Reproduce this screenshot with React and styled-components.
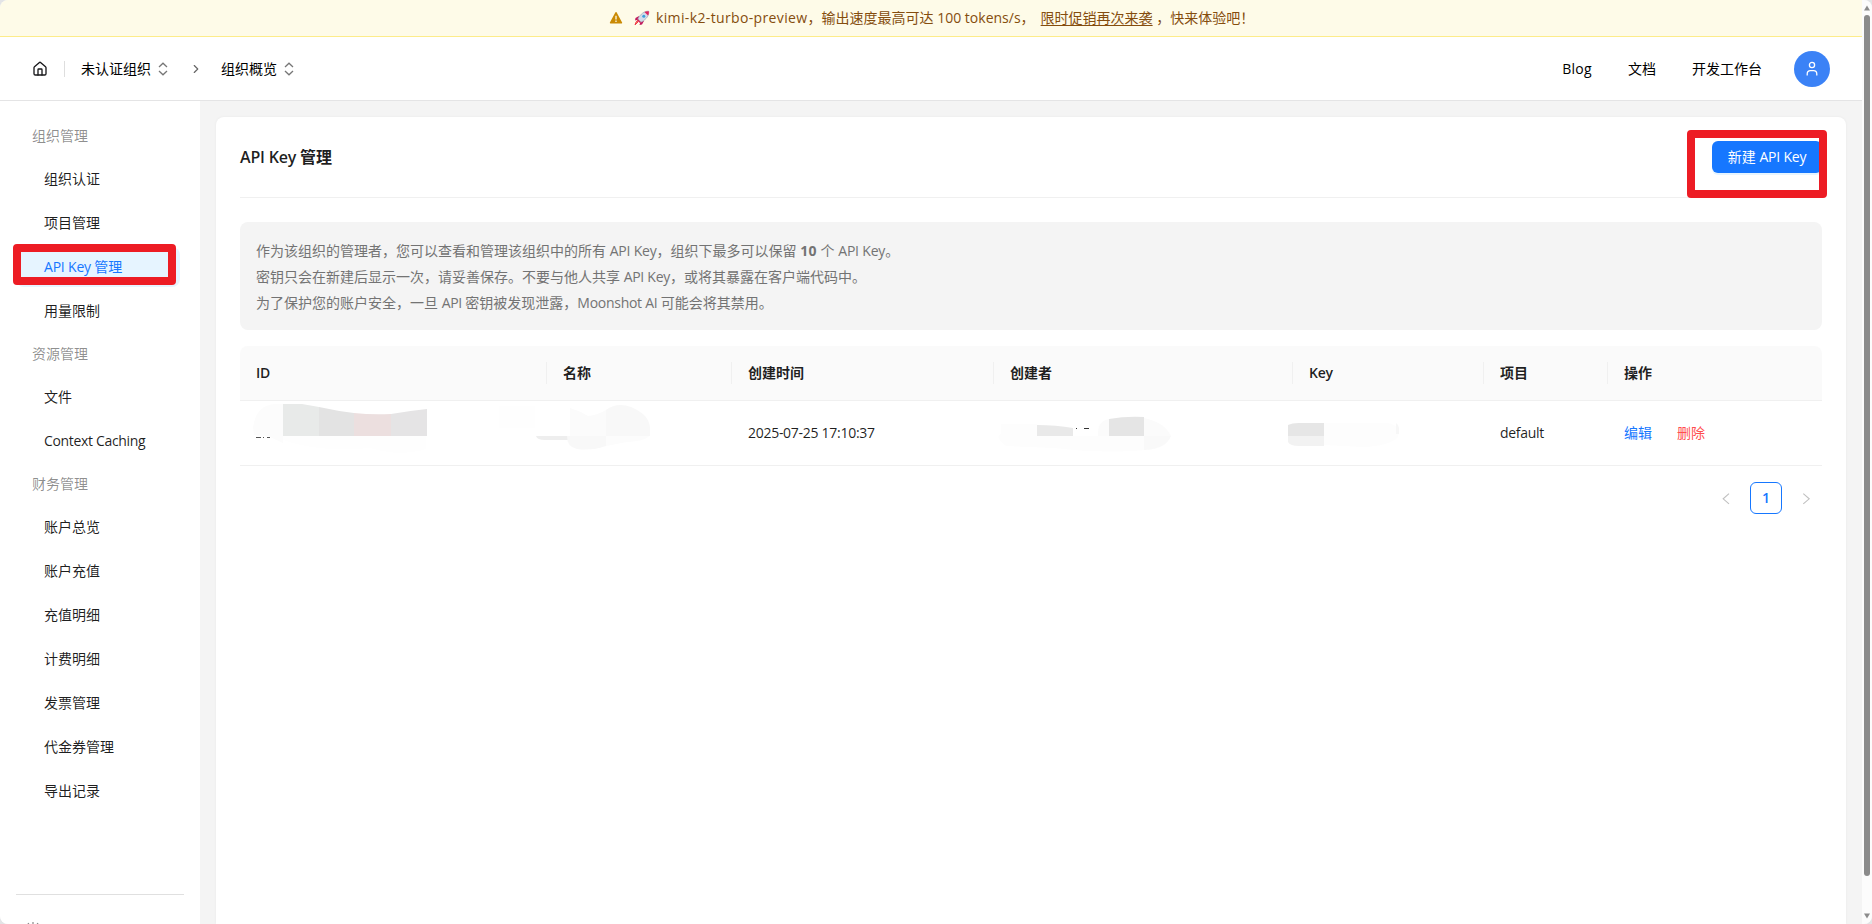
import React from 'react';
import styled, { createGlobalStyle } from 'styled-components';
import { LuHouse, LuChevronRight } from 'react-icons/lu';

const GlobalStyle = createGlobalStyle`
	* {
		box-sizing: border-box;
	}
	body {
		margin: 0;
		background-color: #e3e4e6;
		color: rgba(0, 0, 0, 0.88);
		font-family: 'Open Sans', 'Noto Sans CJK SC', sans-serif;
		font-size: 14px;
		line-height: 22px;
	}
	a {
		color: inherit;
	}
`;

const Latin = styled.span`
	letter-spacing: ${(props) => props.$track || '-0.28px'};
`;

const Window = styled.div`
	position: relative;
	width: 1872px;
	height: 924px;
	display: flex;
	overflow: hidden;
	border-radius: 8px;
	background-color: #f4f4f4;
`;

const Page = styled.div`
	flex: 1;
	display: flex;
	flex-direction: column;
	min-width: 0;
`;

const Banner = styled.div`
	flex: none;
	height: 37px;
	padding-left: 609px;
	display: flex;
	align-items: center;
	white-space: pre;
	color: #854d0e;
	background-color: #fefbe8;
	border-bottom: 1px solid #fdec8a;

	svg {
		flex: none;
	}
`;

const RocketIcon = styled.svg`
	margin-left: 11px;
`;

const BannerText = styled.span`
	margin-left: 6px;
`;

const BannerLink = styled.a`
	margin-left: 6px;
	text-decoration: underline;
	text-underline-offset: 2px;
`;

const Header = styled.header`
	flex: none;
	height: 64px;
	padding: 0 32px;
	display: flex;
	align-items: center;
	justify-content: space-between;
	background-color: #fff;
	border-bottom: 1px solid #e4e4e5;
	color: #000;
`;

const Crumbs = styled.div`
	display: flex;
	align-items: center;

	svg {
		color: #18181b;
	}
`;

const Divider = styled.div`
	width: 1px;
	height: 16px;
	margin: 0 16px;
	background-color: #dedede;
`;

const Picker = styled.div`
	display: flex;
	align-items: center;
	gap: 5px;

	svg {
		color: #777;
	}
`;

const Next = styled.div`
	display: flex;
	width: 51px;
	padding-left: 1px;
	justify-content: center;

	svg {
		color: #666;
	}
`;

const Nav = styled.nav`
	display: flex;
	align-items: center;
	gap: 36px;
`;

const Avatar = styled.div`
	width: 36px;
	height: 36px;
	margin-left: -4px;
	display: flex;
	align-items: center;
	justify-content: center;
	border-radius: 50%;
	background-color: #3b82f6;
	color: #fff;
`;

const Body = styled.div`
	flex: 1;
	display: flex;
	min-height: 0;
`;

const Sidebar = styled.aside`
	flex: none;
	width: 200px;
	padding: 16px 16px 0;
	display: flex;
	flex-direction: column;
	background-color: #fff;
`;

const GroupTitle = styled.div`
	height: 38px;
	padding: 8px 16px;
	color: rgba(0, 0, 0, 0.45);
`;

const MenuItem = styled.div`
	position: relative;
	height: 40px;
	margin: 4px 4px 4px 0;
	padding-left: 28px;
	line-height: 40px;
	border-radius: 8px;
	color: ${(props) => (props.$active ? '#1677ff' : 'inherit')};
	background-color: ${(props) => (props.$active ? '#e6f4ff' : 'transparent')};

	& + & {
		margin-top: 0;
	}
`;

const SidebarFooter = styled.div`
	height: 30px;
	margin-top: auto;
	padding: 27px 0 0 9px;
	overflow: hidden;
	border-top: 1px solid #e0e0e0;
`;

const Content = styled.main`
	flex: 1;
	padding: 16px 16px 0;
	display: flex;
	min-width: 0;
`;

const Card = styled.section`
	flex: 1;
	padding: 0 24px;
	border-radius: 8px 8px 0 0;
	background-color: #fff;
	box-shadow: 0 0 3px rgba(0, 0, 0, 0.05);
`;

const CardHeader = styled.div`
	height: 81px;
	display: flex;
	align-items: center;
	justify-content: space-between;
	border-bottom: 1px solid #f0f0f0;
`;

const Title = styled.h1`
	margin: 0;
	font-size: 16px;
	font-weight: 600;
	line-height: 24px;
`;

const Primary = styled.button`
	height: 32px;
	width: 110px;
	padding: 0;
	border: 0;
	border-radius: 6px;
	background-color: #1677ff;
	box-shadow: 0 2px 0 rgba(5, 145, 255, 0.1);
	color: #fff;
	font: inherit;
	white-space: nowrap;
`;

const ButtonSlot = styled.div`
	position: relative;
`;

// Red frame drawn over a control
const Marker = styled.div`
	position: absolute;
	z-index: 2;
	top: ${(props) => props.$top};
	left: ${(props) => props.$left};
	width: ${(props) => props.$width};
	height: ${(props) => props.$height};
	border: 8px solid #ed1c24;
	border-radius: 4px;
	pointer-events: none;
`;

const Notice = styled.div`
	height: 108px;
	margin: 24px 0 16px;
	padding: 16px;
	border-radius: 8px;
	background-color: #f4f4f4;
	color: #737373;
	line-height: 26px;

	p {
		margin: 0;
	}
	b {
		font-weight: 700;
		letter-spacing: 0.4px;
	}
`;

const Row = styled.div`
	display: grid;
	grid-template-columns: 307px 185px 262px 299px 191px 124px 1fr;
	align-items: center;
	height: ${(props) => (props.$head ? '55px' : '65px')};
	border-bottom: 1px solid #f0f0f0;
	border-radius: ${(props) => (props.$head ? '8px 8px 0 0' : '0')};
	background-color: ${(props) => (props.$head ? '#fafafa' : '#fff')};
`;

const HeadCell = styled.div`
	height: 22px;
	padding-left: 16px;
	font-weight: 600;
	border-right: 1px solid #f0f0f0;

	&:last-child {
		border-right: 0;
	}
`;

const Cell = styled.div`
	position: relative;
	padding-left: 16px;
	height: 22px;
`;

const Smudge = styled.svg`
	position: absolute;
	top: ${(props) => props.$top || '-21px'};
	left: ${(props) => props.$left || '0'};
`;

const Action = styled.a`
	margin-right: 25px;
	color: ${(props) => (props.$danger ? '#ff4d4f' : '#1677ff')};
`;

const Pagination = styled.div`
	margin-top: 16px;
	display: flex;
	justify-content: flex-end;
	gap: 8px;
`;

const PageItem = styled.div`
	width: 32px;
	height: 32px;
	display: flex;
	align-items: center;
	justify-content: center;
	border: 1px solid ${(props) => (props.$active ? '#1677ff' : 'transparent')};
	border-radius: 6px;
	font-weight: 600;
	color: ${(props) => (props.$active ? '#1677ff' : 'rgba(0, 0, 0, 0.25)')};
`;

const Scrollbar = styled.div`
	flex: none;
	width: 10px;
	padding: 5px 0 5px 2px;
	display: flex;
	flex-direction: column;
	background-color: #fcfcfc;
`;

const Thumb = styled.div`
	width: 6px;
	height: 861px;
	margin: 4px 0 auto;
	border-radius: 3px;
	background-color: #8b8b8b;
`;

const MENU = [
	{ title: '组织管理', items: ['组织认证', '项目管理', 'API Key 管理', '用量限制'] },
	{ title: '资源管理', items: ['文件', 'Context Caching'] },
	{
		title: '财务管理',
		items: [
			'账户总览',
			'账户充值',
			'充值明细',
			'计费明细',
			'发票管理',
			'代金券管理',
			'导出记录',
		],
	},
];

const COLUMNS = ['ID', '名称', '创建时间', '创建者', 'Key', '项目', '操作'];

const withLatin = (text, track) =>
	text
		.split(/([A-Za-z0-9][A-Za-z0-9 ]*)/)
		.map((part, i) => (i % 2 ? <Latin key={i} $track={track}>{part}</Latin> : part));

const Warning = () => (
	<svg width="14" height="14" viewBox="0 0 14 14">
		<path
			d="M7 1.8 12.4 11.8H1.6Z"
			fill="#ca8a04"
			stroke="#ca8a04"
			strokeWidth="1.6"
			strokeLinejoin="round"
		/>
		<path d="M7 4.8V8.4M7 9.6V11" stroke="#fefbe8" strokeWidth="1.3" />
	</svg>
);

const Rocket = () => (
	<RocketIcon width="16" height="16" viewBox="0 0 16 16">
		<path d="M5 6 1.5 8 1 10.5 4.5 9.5ZM10 11 8 14.5 5.5 15 6.5 11.5Z" fill="#c2185b" />
		<path d="M4 12 1 15 2 12.2 3.4 10.6Z" fill="#f59e4b" stroke="#f03a4f" />
		<path d="M14.8 1.2C15.2 5 13 9 7 12.2L3.8 9C6.5 4 10.5.8 14.8 1.2Z" fill="#d3dce8" stroke="#8c9ab0" strokeWidth=".6" />
		<path d="M14.8 1.2C15 3 14.8 4.2 14 5.6L10.4 2C11.6 1.3 13 1 14.8 1.2Z" fill="#e0245e" />
		<path d="M3.8 9 7 12.2 5.6 12.8 3.2 10.4Z" fill="#d81b52" />
		<circle cx="9.8" cy="6.2" r="1.5" fill="#3aa0dc" />
	</RocketIcon>
);

const UpDown = () => (
	<svg width="14" height="14" viewBox="0 0 14 14" fill="none" stroke="currentColor" strokeWidth="1.3">
		<path d="M3 5 7 1.2 11 5M3 9 7 12.8 11 9" />
	</svg>
);

const User = () => (
	<svg width="16" height="16" viewBox="0 0 16 16" fill="none" stroke="currentColor" strokeWidth="1.3">
		<circle cx="8" cy="4" r="2.6" />
		<path d="M3.2 14.6V13Q3.2 9.6 6.4 9.6H9.6Q12.8 9.6 12.8 13V14.6" />
	</svg>
);

const SideBar = () => (
	<Sidebar>
		{MENU.map((group) => (
			<React.Fragment key={group.title}>
				<GroupTitle>{group.title}</GroupTitle>
				{group.items.map((item) => (
					<MenuItem key={item} $active={item === 'API Key 管理'}>
						{withLatin(item, item === 'API Key 管理' ? '-0.2px' : '-0.33px')}
						{item === 'API Key 管理' && (
							<Marker $top="-3px" $left="-3px" $width="163px" $height="41px" />
						)}
					</MenuItem>
				))}
			</React.Fragment>
		))}
		<SidebarFooter>
			<svg width="16" height="16" viewBox="0 0 16 16" fill="none" stroke="#888" strokeWidth="1.2">
				<path d="M8 0V3M3 1 5 4M13 1 11 4" />
				<circle cx="8" cy="8" r="3" />
			</svg>
		</SidebarFooter>
	</Sidebar>
);

const KeyTable = () => (
	<div>
		<Row $head>
			{COLUMNS.map((name) => (
				<HeadCell key={name}>{withLatin(name)}</HeadCell>
			))}
		</Row>
		<Row>
			<Cell>
				<Smudge width="300" height="62" viewBox="0 0 300 62">
					<path d="M13 26Q16 5 34 3H43V42L28 35L14 34Z" fill="#fcfcfc" />
					<path d="M43 35H186V48Q160 56 130 47Q80 52 43 39Z" fill="#fefefe" />
					<path d="M43 3H62L79 6V35H43Z" fill="#e8eae9" />
					<path d="M79 6Q97 10 114 12V35H79Z" fill="#e3e3e3" />
					<path d="M114 12Q132 14 151 13V35H114Z" fill="#ecdfdf" />
					<path d="M151 13Q168 10 187 8V35H151Z" fill="#e5e4e5" />
					<path d="M16 36.5H21M23 36.5H24M27 36.5H30" stroke="#555" />
				</Smudge>
			</Cell>
			<Cell>
				<Smudge $left="-50px" width="180" height="62" viewBox="0 0 180 62">
					<path d="M2 5H38V27H2Z" fill="#fefefe" />
					<path d="M73 7Q83 10 91 15Q101 14 109 9V35H73Z" fill="#fbfbfb" />
					<path d="M109 9Q120 1 134 6Q153 14 153 28V35H109Z" fill="#f8f8f8" />
					<path d="M39 35H73V39H48Q40 39 39 35Z" fill="#eee" />
					<path d="M70 35H109V45Q95 50 80 48Q70 46 70 35Z" fill="#f8f8f8" />
					<path d="M109 35H152Q148 40 130 41L109 45Z" fill="#fcfcfc" />
				</Smudge>
			</Cell>
			<Cell>
				<Latin $track="-0.28px">2025-07-25 17:10:37</Latin>
			</Cell>
			<Cell>
				<Smudge $top="-19px" width="190" height="62" viewBox="0 0 190 62">
					<path d="M7 21H43V33H175Q174 46 152 47Q110 51 60 45L12 43Q0 34 7 31Z" fill="#fdfdfd" />
					<path d="M43 22Q62 22 79 25V33H43Z" fill="#e9e9e9" />
					<path d="M104 29Q104 18 115 16V33H104ZM150 15Q170 19 177 33H150Z" fill="#fbfbfb" />
					<path d="M115 16Q132 13 150 14V33H115Z" fill="#e5e5e5" />
					<path d="M150 33H177Q172 46 150 47Z" fill="#f9f9f9" />
					<path d="M82 25.5H83M90 25.5H95" stroke="#333" />
				</Smudge>
			</Cell>
			<Cell>
				<Smudge $top="-19px" $left="-10px" width="130" height="62" viewBox="0 0 130 62">
					<path d="M41 20H105Q118 22 115 34Q106 43 80 44L41 42Z" fill="#fdfdfd" />
					<path d="M5 22Q9 20 16 20H41V33H5Z" fill="#e6e6e6" />
					<path d="M5 33H41V43H16Q7 43 5 39Z" fill="#f2f2f2" />
					<path d="M113 20Q116 22 116 25V31H113Z" fill="#f7f7f7" />
				</Smudge>
			</Cell>
			<Cell>
				<Latin $track="-0.3px">default</Latin>
			</Cell>
			<Cell>
				<Action>编辑</Action>
				<Action $danger>删除</Action>
			</Cell>
		</Row>
	</div>
);

const Chevron = ({ d }) => (
	<svg width="12" height="14" viewBox="0 0 12 14" fill="none" stroke="currentColor" strokeWidth="1.1">
		<path d={d} />
	</svg>
);

const App = () => (
	<>
		<GlobalStyle />
		<Window>
			<Page>
				<Banner>
					<Warning />
					<Rocket />
					<BannerText>
						<Latin $track="0.36px">kimi-k2-turbo-preview</Latin>，输出速度最高可达{' '}
						<Latin $track="0.01px">100 tokens/s</Latin>，
					</BannerText>
					<BannerLink>限时促销再次来袭</BannerLink>
					<span> ，快来体验吧！</span>
				</Banner>
				<Header>
					<Crumbs>
						<LuHouse size={16} />
						<Divider />
						<Picker>
							未认证组织
							<UpDown />
						</Picker>
						<Next>
							<LuChevronRight size={14} />
						</Next>
						<Picker>
							组织概览
							<UpDown />
						</Picker>
					</Crumbs>
					<Nav>
						<Latin $track="0.3px">Blog</Latin>
						<span>文档</span>
						<span>开发工作台</span>
						<Avatar>
							<User />
						</Avatar>
					</Nav>
				</Header>
				<Body>
					<SideBar />
					<Content>
						<Card>
							<CardHeader>
								<Title>{withLatin('API Key 管理', '-0.2px')}</Title>
								<ButtonSlot>
									<Primary>{withLatin('新建 API Key', '-0.2px')}</Primary>
									<Marker $top="-11px" $left="-25px" $width="140px" $height="68px" />
								</ButtonSlot>
							</CardHeader>
							<Notice>
								<p>
									{withLatin('作为该组织的管理者，您可以查看和管理该组织中的所有 API Key，组织下最多可以保留 ', '-0.2px')}
									<b>10</b>
									{withLatin(' 个 API Key。', '-0.2px')}
								</p>
								<p>{withLatin('密钥只会在新建后显示一次，请妥善保存。不要与他人共享 API Key，或将其暴露在客户端代码中。')}</p>
								<p>{withLatin('为了保护您的账户安全，一旦 API 密钥被发现泄露，Moonshot AI 可能会将其禁用。')}</p>
							</Notice>
							<KeyTable />
							<Pagination>
								<PageItem>
									<Chevron d="M9 2.7 3.2 7.8 9 12.9" />
								</PageItem>
								<PageItem $active>1</PageItem>
								<PageItem>
									<Chevron d="M3.3 2.7 9.2 7.8 3.3 12.9" />
								</PageItem>
							</Pagination>
						</Card>
					</Content>
				</Body>
			</Page>
			<Scrollbar>
				<svg width="6" height="6" viewBox="0 0 6 6">
					<path d="M3 .5 6 5.5H0Z" fill="#8b8b8b" />
				</svg>
				<Thumb />
				<svg width="6" height="6" viewBox="0 0 6 6">
					<path d="M3 5.5 6 .5H0Z" fill="#8b8b8b" />
				</svg>
			</Scrollbar>
		</Window>
	</>
);

export default App;
